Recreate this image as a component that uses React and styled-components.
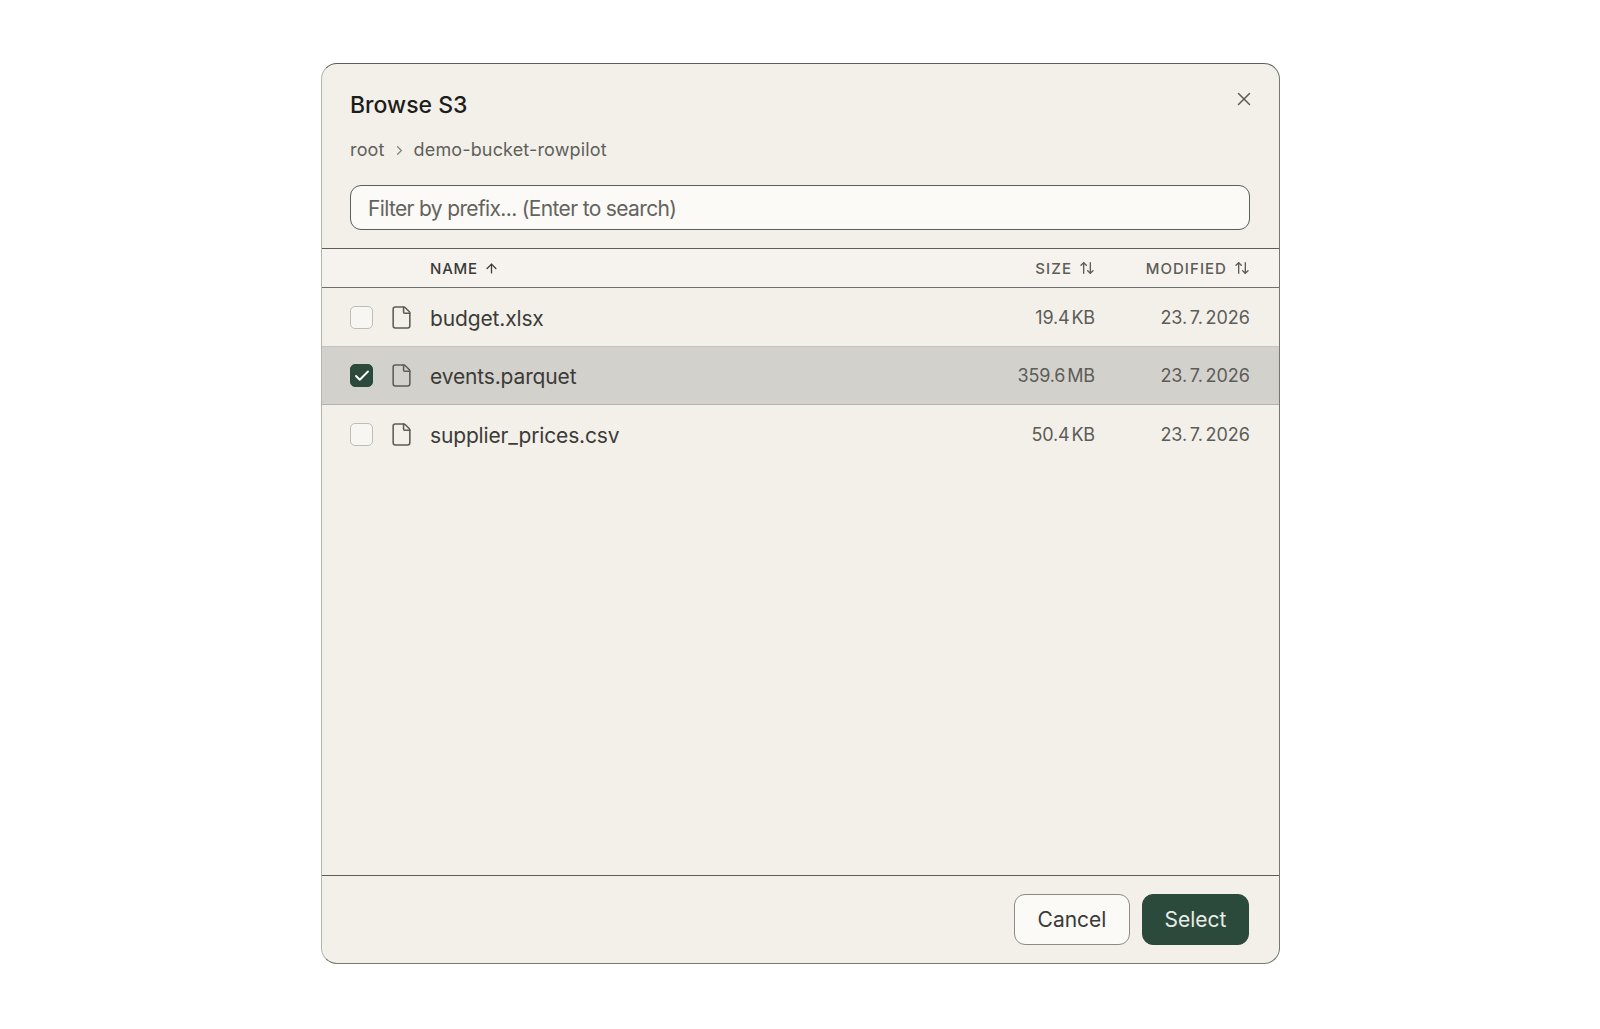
import styled, { createGlobalStyle } from "styled-components";
import { ArrowUp, ArrowUpDown, Check, ChevronRight, File, X } from "lucide-react";

const GlobalStyle = createGlobalStyle`
  html, body {
    margin: 0;
    background: #fff;
    font-family: "Inter", "Liberation Sans", sans-serif;
  }
`;

const Page = styled.div`
  display: flex;
  justify-content: center;
  padding: 63px 0 0 1px;
`;

const Modal = styled.div`
  box-sizing: border-box;
  width: 959px;
  height: 901px;
  display: flex;
  flex-direction: column;
  background: #f3f0ea;
  border: 1px solid #77776f;
  border-left-color: #b5b4ae;
  border-top-color: #5c5c56;
  border-radius: 16px;
  overflow: hidden;
`;

const Header = styled.div`
  position: relative;
  padding: 26px 29px 18px 28px;
`;

const Title = styled.h2`
  margin: 0;
  font-size: 23px;
  line-height: 30px;
  font-weight: 500;
  color: #1d1d1b;
`;

const CloseButton = styled.button`
  position: absolute;
  top: 24px;
  right: 24px;
  padding: 0;
  display: flex;
  border: 0;
  background: none;
  color: #5b5b57;
`;

const Breadcrumb = styled.div`
  display: flex;
  align-items: center;
  gap: 7px;
  margin-top: 18px;
  font-size: 18px;
  line-height: 24px;
  letter-spacing: 0.15px;
  color: #5f5f5a;
  svg {
    color: #85857f;
  }
`;

const Search = styled.input`
  box-sizing: border-box;
  display: block;
  width: 100%;
  height: 45px;
  margin-top: 23px;
  padding: 1px 17px 0;
  background: #fbfaf7;
  border: 1.5px solid #5a5f58;
  border-radius: 11px;
  outline: none;
  font: 400 21px "Inter", sans-serif;
  letter-spacing: -0.65px;
  &::placeholder {
    color: #63635e;
    opacity: 1;
  }
`;

const cols = "grid-template-columns: 108px 1fr 120px 155px;";

const TableHead = styled.div`
  display: grid;
  ${cols}
  align-items: center;
  height: 40px;
  padding-right: 29px;
  border-top: 1px solid #5c5f59;
  border-bottom: 1px solid #6d706a;
  box-sizing: border-box;
  font-size: 15px;
  font-weight: 500;
  background: #f6f3ee;
`;

const HeadCell = styled.div`
  grid-column: ${(p) => p.$col};
  display: flex;
  align-items: center;
  justify-content: ${(p) => (p.$right ? "flex-end" : "flex-start")};
  gap: ${(p) => (p.$active ? "6px" : "7px")};
  letter-spacing: ${(p) => (p.$active ? "0.8px" : "1.05px")};
  color: ${(p) => (p.$active ? "#3a3a37" : "#5c5c58")};
`;

const Rows = styled.div`
  flex: 1;
`;

const Row = styled.div`
  display: grid;
  ${cols}
  align-items: center;
  height: 58.5px;
  padding-right: 29px;
  box-sizing: border-box;
  background: ${(p) => (p.$selected ? "#d3d1cc" : "transparent")};
  box-shadow: ${(p) => (p.$selected ? "0 -1px 0 #c4c3be, inset 0 -1px 0 #b3b2ad" : "none")};
`;

const IconCell = styled.div`
  display: flex;
  align-items: center;
  padding-left: 28px;
  gap: 16px;
  color: #5c5c58;
`;

const Checkbox = styled.span`
  box-sizing: border-box;
  flex: none;
  width: 23px;
  height: 23px;
  display: flex;
  align-items: center;
  justify-content: center;
  border-radius: 5px;
  border: 1.5px solid ${(p) => (p.$checked ? "#2b4a3b" : "#bdbcb6")};
  background: ${(p) => (p.$checked ? "#2b4a3b" : "#f8f6f2")};
  color: #fff;
`;

const FileName = styled.div`
  padding-top: 2px;
  font-size: 21px;
  color: #3b3b38;
  letter-spacing: -0.15px;
`;

const Size = styled.div`
  font-size: 18px;
  text-align: right;
  color: #5c5c58;
  letter-spacing: -0.15px;
  word-spacing: -3px;
`;

const Modified = styled(Size)`
  letter-spacing: 0;
  word-spacing: -2.5px;
`;

const Footer = styled.div`
  display: flex;
  justify-content: flex-end;
  gap: 12px;
  padding: 18px 30px 18px;
  border-top: 1px solid #5c5f59;
`;

const Button = styled.button`
  box-sizing: border-box;
  height: 51px;
  width: ${(p) => (p.$primary ? "107px" : "116px")};
  border-radius: 11px;
  font: 400 21px "Inter", sans-serif;
  color: ${(p) => (p.$primary ? "#e9ece6" : "#3a3a37")};
  background: ${(p) => (p.$primary ? "#2b4a3b" : "#fbfaf7")};
  border: 1.5px solid ${(p) => (p.$primary ? "#2b4a3b" : "#8b8b85")};
`;

const files = [
  { name: "budget.xlsx", size: "19.4 KB", date: "23. 7. 2026" },
  { name: "events.parquet", size: "359.6 MB", date: "23. 7. 2026", selected: true },
  { name: "supplier_prices.csv", size: "50.4 KB", date: "23. 7. 2026" },
];

export default function App() {
  return (
    <Page>
      <GlobalStyle />
      <Modal>
        <Header>
          <Title>Browse S3</Title>
          <CloseButton>
            <X size={22} strokeWidth={1.6} />
          </CloseButton>
          <Breadcrumb>
            root <ChevronRight size={15} /> demo-bucket-rowpilot
          </Breadcrumb>
          <Search placeholder="Filter by prefix... (Enter to search)" />
        </Header>
        <TableHead>
          <HeadCell $col={2} $active>
            NAME <ArrowUp size={15} />
          </HeadCell>
          <HeadCell $col={3} $right>
            SIZE <ArrowUpDown size={16} />
          </HeadCell>
          <HeadCell $col={4} $right>
            MODIFIED <ArrowUpDown size={16} />
          </HeadCell>
        </TableHead>
        <Rows>
          {files.map((f) => (
            <Row key={f.name} $selected={f.selected}>
              <IconCell>
                <Checkbox $checked={f.selected}>
                  {f.selected && <Check size={18} strokeWidth={2.5} />}
                </Checkbox>
                <File size={25} strokeWidth={1.5} />
              </IconCell>
              <FileName>{f.name}</FileName>
              <Size>{f.size}</Size>
              <Modified>{f.date}</Modified>
            </Row>
          ))}
        </Rows>
        <Footer>
          <Button>Cancel</Button>
          <Button $primary>Select</Button>
        </Footer>
      </Modal>
    </Page>
  );
}
